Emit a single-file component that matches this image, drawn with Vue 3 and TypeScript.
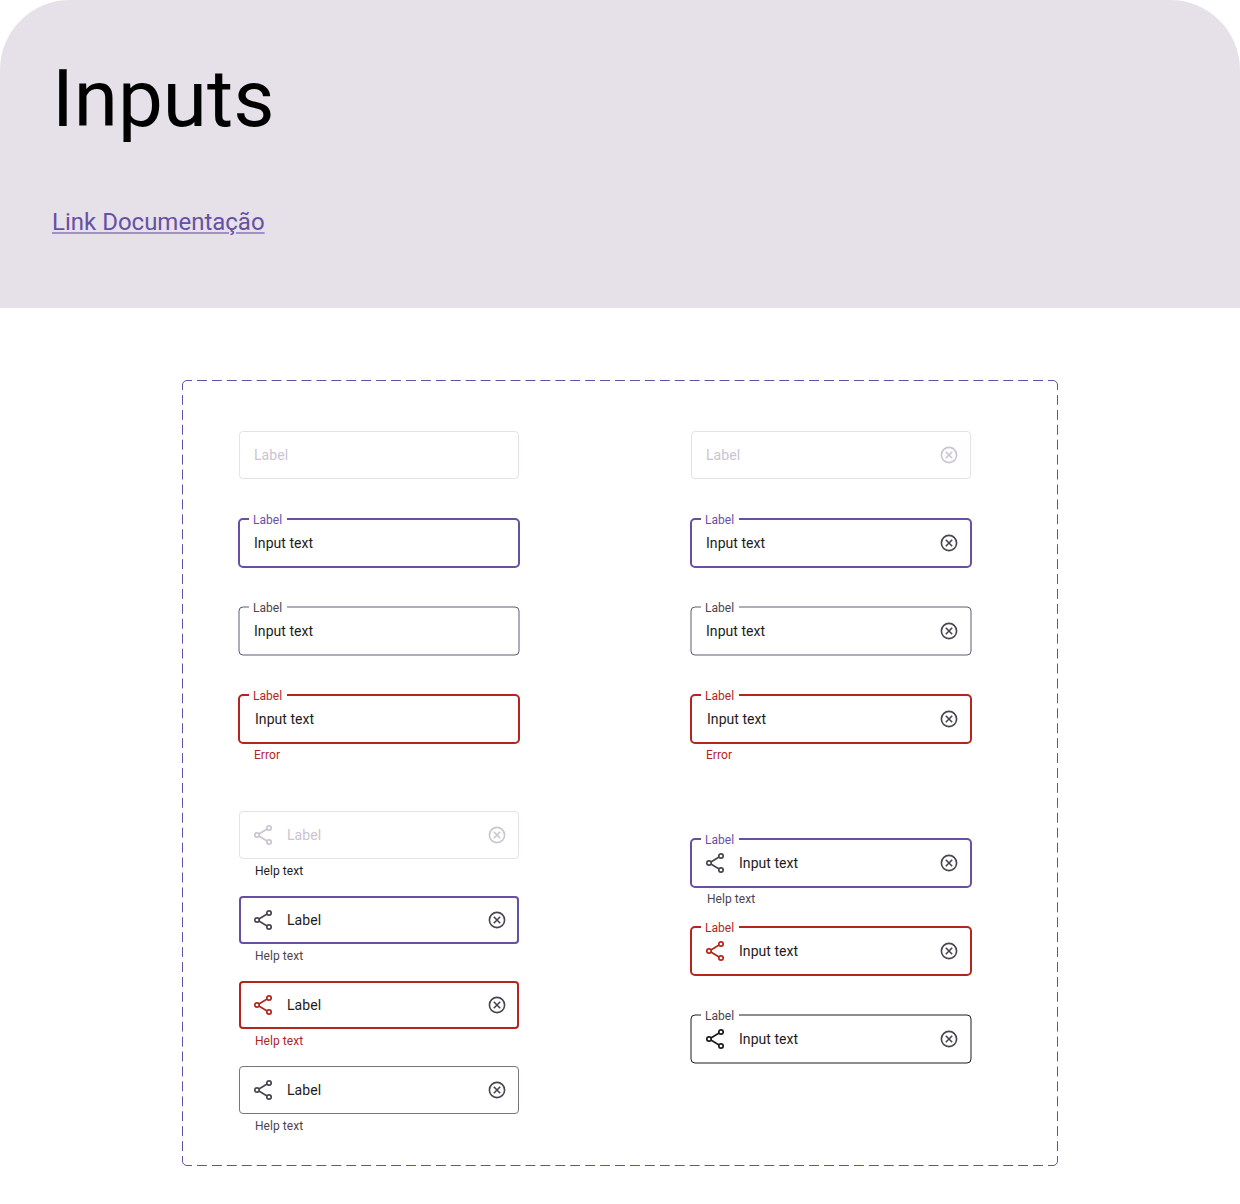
<script setup lang="ts">
type Tone = 'disabled' | 'focus' | 'enabled' | 'error' | 'strong'

interface Field {
  tone: Tone
  text: string
  label?: string
  help?: string
  helpTone?: string
  share?: boolean
  clear?: boolean
  nudge?: boolean
  helpNudge?: boolean
}

const columns: Field[][][] = [
  [
    [
      { tone: 'disabled', text: 'Label' },
      { tone: 'focus', text: 'Input text', label: 'Label' },
      { tone: 'enabled', text: 'Input text', label: 'Label' },
      { tone: 'error', text: 'Input text', label: 'Label', help: 'Error', helpTone: 'red', nudge: true },
    ],
    [
      { tone: 'disabled', text: 'Label', share: true, clear: true, help: 'Help text', helpTone: 'dark', helpNudge: true },
      { tone: 'focus', text: 'Label', share: true, clear: true, help: 'Help text', helpNudge: true },
      { tone: 'error', text: 'Label', share: true, clear: true, help: 'Help text', helpTone: 'red', helpNudge: true },
      { tone: 'enabled', text: 'Label', share: true, clear: true, help: 'Help text', helpNudge: true },
    ],
  ],
  [
    [
      { tone: 'disabled', text: 'Label', clear: true },
      { tone: 'focus', text: 'Input text', label: 'Label', clear: true },
      { tone: 'enabled', text: 'Input text', label: 'Label', clear: true },
      { tone: 'error', text: 'Input text', label: 'Label', clear: true, help: 'Error', helpTone: 'red', nudge: true },
    ],
    [
      { tone: 'focus', text: 'Input text', label: 'Label', share: true, clear: true, help: 'Help text', helpNudge: true },
      { tone: 'error', text: 'Input text', label: 'Label', share: true, clear: true },
      { tone: 'strong', text: 'Input text', label: 'Label', share: true, clear: true },
    ],
  ],
]
</script>

<template>
  <main class="page">
    <header class="hero">
      <h1>Inputs</h1>
      <a class="doc" href="#">Link Documentação</a>
    </header>

    <section class="panel">
      <svg class="frame" width="876" height="786" viewBox="0 0 876 786" aria-hidden="true">
        <path class="dash-h" d="M5 .5H871M5 785.5H871" />
        <path class="dash-v" d="M.5 5V781M875.5 5V781" />
        <path d="M.5 5A4.5 4.5 0 0 1 5 .5M871 .5A4.5 4.5 0 0 1 875.5 5M875.5 781A4.5 4.5 0 0 1 871 785.5M5 785.5A4.5 4.5 0 0 1 .5 781" />
      </svg>

      <div v-for="(column, c) in columns" :key="c" class="column" :class="`column-${c}`">
        <div v-for="(group, g) in column" :key="g" class="group">
          <div v-for="(field, i) in group" :key="i" class="field" :class="field.tone">
            <div class="control" :class="{ boxed: !field.label }">
              <svg v-if="field.label" class="outline" width="280" height="48" viewBox="0 0 280 48" aria-hidden="true">
                <path d="M10 0H4A4 4 0 0 0 0 4V44A4 4 0 0 0 4 48H276A4 4 0 0 0 280 44V4A4 4 0 0 0 276 0H48" />
              </svg>
              <span v-if="field.label" class="floating">{{ field.label }}</span>
              <svg v-if="field.share" class="share" width="24" height="24" viewBox="0 0 24 24" aria-hidden="true">
                <path d="M16.1 6.1 7.9 10.9M7.9 13.1 16.1 17.9" />
                <circle cx="18" cy="5" r="2.2" />
                <circle cx="6" cy="12" r="2.2" />
                <circle cx="18" cy="19" r="2.2" />
              </svg>
              <span class="value" :class="{ nudge: field.nudge }">{{ field.text }}</span>
              <svg v-if="field.clear" class="clear" width="20" height="20" viewBox="0 0 20 20" aria-hidden="true">
                <circle cx="10" cy="10" r="7.6" />
                <path d="M6.8 6.8 13.2 13.2M13.2 6.8 6.8 13.2" />
              </svg>
            </div>
            <div v-if="field.help" class="help" :class="[field.helpTone, { nudge: field.helpNudge }]">{{ field.help }}</div>
          </div>
        </div>
      </div>
    </section>
  </main>
</template>

<style>
body {
  background: #fff;
}
</style>

<style scoped>
.page {
  width: 1240px;
  height: 1204px;
  overflow: hidden;
  font-family: Roboto, sans-serif;
  color: #1d1b20;
}

.hero {
  box-sizing: border-box;
  height: 308px;
  padding: 51px 52px 0;
  border-radius: 70px 70px 0 0;
  background: #e6e1e8;
}

h1 {
  margin: 0;
  font-size: 80px;
  line-height: 96px;
  font-weight: 400;
  color: #000;
}

.doc {
  display: block;
  width: max-content;
  margin-top: 59px;
  font-size: 24px;
  line-height: 32px;
  color: #6750a4;
  text-decoration: underline;
  text-decoration-color: #9e8fc6;
}

.panel {
  position: relative;
  box-sizing: border-box;
  display: flex;
  gap: 172px;
  width: 876px;
  height: 786px;
  margin: 72px auto 0;
  padding: 51px 57px 0;
}

.frame {
  position: absolute;
  inset: 0;
  fill: none;
  stroke: #6750a4;
}

.dash-h {
  stroke-dasharray: 9.954 4.977;
  stroke-dashoffset: 4.977;
}

.dash-v {
  stroke-dasharray: 9.949 4.974;
  stroke-dashoffset: 4.974;
}

.column {
  display: flex;
  flex-direction: column;
  gap: 68px;
  width: 280px;
}

.column-1 {
  gap: 96px;
}

.group {
  display: flex;
  flex-direction: column;
  gap: 40px;
}

.column-0 .group:last-child {
  gap: 37px;
}

.field {
  --line: #79747e;
  --line-width: 1px;
  --icon: #49454f;
  --label: #49454f;
  height: 48px;
}

.disabled {
  --line: #e6e0e9;
  --icon: #cac4d0;
}

.disabled .value {
  color: #cac4d0;
}

.focus {
  --line: #6750a4;
  --line-width: 2px;
  --label: #6750a4;
}

.error {
  --line: #b3261e;
  --line-width: 2px;
  --label: #b3261e;
}

.strong {
  --line: #1d1b20;
}

.control {
  position: relative;
  box-sizing: border-box;
  display: flex;
  align-items: center;
  height: 48px;
  padding: 0 12px;
}

.boxed {
  border: var(--line-width) solid var(--line);
  border-radius: 4px;
  padding: 0 calc(12px - var(--line-width));
}

.outline {
  position: absolute;
  inset: 0;
  overflow: visible;
  fill: none;
  stroke: var(--line);
  stroke-width: var(--line-width);
}

.enabled .outline {
  stroke: #5d5a72;
}

.floating {
  position: absolute;
  left: 14px;
  top: -7px;
  font-size: 12px;
  line-height: 16px;
  letter-spacing: 0.04px;
  color: var(--label);
}

.value {
  flex: 1;
  margin-left: 3px;
  font-size: 14px;
  line-height: 20px;
  letter-spacing: 0.05px;
}

.value.nudge {
  margin-left: 4px;
}

.share {
  flex: none;
  margin-right: 9px;
  fill: none;
  stroke: var(--icon);
  stroke-width: 1.7px;
}

.error .share {
  stroke: #b3261e;
}

.strong .share {
  stroke: #1d1b20;
}

.clear {
  flex: none;
  fill: none;
  stroke: var(--icon);
  stroke-width: 1.6px;
}

.help {
  margin: 4px 0 0 15px;
  font-size: 12px;
  line-height: 16px;
  letter-spacing: 0.05px;
  color: #49454f;
}

.help.nudge {
  margin-left: 16px;
}

.help.red {
  color: #b3261e;
}

.help.dark {
  color: #1d1b20;
}
</style>
